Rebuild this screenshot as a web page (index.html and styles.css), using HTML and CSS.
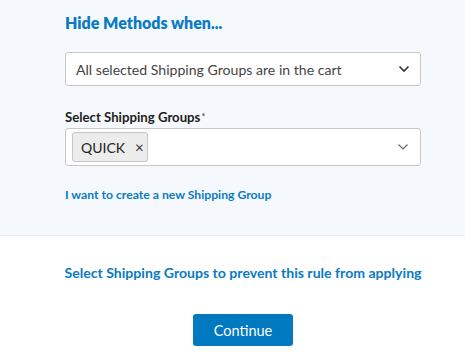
FILE: index.html
```html
<!DOCTYPE html>
<html>
<head>
<meta charset="utf-8">
<link rel="stylesheet" href="styles.css">
</head>
<body>
<section class="panel">
  <div class="col">
    <h2 class="title">Hide Methods when...</h2>
    <div class="select">
      <span class="select-text">All selected Shipping Groups are in the cart</span>
      <svg class="chev dark" width="12" height="8" viewBox="0 0 12 8"><path d="M1.5 1.5 L6 6 L10.5 1.5" fill="none" stroke="#333" stroke-width="1.6"/></svg>
    </div>
    <label class="label">Select Shipping Groups<span class="req">*</span></label>
    <div class="multi">
      <span class="chip">QUICK <span class="x">×</span></span>
      <svg class="chev" width="12" height="8" viewBox="0 0 12 8"><path d="M1.5 1.5 L6 6 L10.5 1.5" fill="none" stroke="#666" stroke-width="1.1"/></svg>
    </div>
    <a class="link" href="#">I want to create a new Shipping Group</a>
  </div>
</section>
<section class="footer">
  <div class="col center">
    <p class="hint">Select Shipping Groups to prevent this rule from applying</p>
    <button class="btn">Continue</button>
  </div>
</section>
</body>
</html>
```
FILE: styles.css
```css
* { box-sizing: border-box; }
html, body { margin: 0; padding: 0; background: #fff; }
body { font-family: Lato, "Open Sans", sans-serif; color: #222; }
.panel {
  background: #f5f9fd;
  border-bottom: 1px solid #e3e9ef;
  height: 236px;
  padding-top: 13px;
}
.col { margin-left: 65px; width: 356px; display: flex; flex-direction: column; }
.center { align-items: center; }
.title {
  margin: 0;
  font-size: 16px;
  font-weight: 800;
  color: #0a7ac4;
  line-height: 20px;
}
.select {
  margin-top: 19px;
  height: 34px;
  background: #fff;
  border: 1px solid #c8c8c8;
  border-radius: 3px;
  display: flex;
  align-items: center;
  justify-content: space-between;
  padding: 0 10px 0 10px;
}
.select-text { font-size: 14.1px; color: #444; }
.label {
  margin-top: 23px;
  font-size: 13.2px;
  font-weight: 700;
  color: #222;
  line-height: 16px;
}
.req { font-size: 9px; vertical-align: top; color: #555; margin-left: 1px; }
.multi {
  margin-top: 3px;
  height: 38px;
  background: #fff;
  border: 1px solid #c8c8c8;
  border-radius: 3px;
  display: flex;
  align-items: center;
  justify-content: space-between;
  padding: 0 11px 0 6px;
}
.chip {
  height: 30px;
  width: 76px;
  background: #ececec;
  border: 1px solid #c6c6c6;
  border-radius: 3px;
  display: flex;
  align-items: center;
  padding-left: 8px;
  font-size: 14px;
  color: #222;
}
.x { margin-left: 10px; font-size: 15px; color: #333; }
.link {
  margin-top: 21px;
  font-size: 12.2px;
  font-weight: 700;
  color: #0a7ac4;
  text-decoration: none;
  line-height: 15px;
}
.footer { padding-top: 28px; }
.hint {
  margin: 0;
  font-size: 14.1px;
  font-weight: 700;
  color: #0a7ac4;
  line-height: 18px;
  white-space: nowrap;
}
.btn {
  margin-top: 32px;
  width: 100px;
  height: 32px;
  background: #0079c1;
  color: #fff;
  border: none;
  border-radius: 3px;
  font-family: inherit;
  font-size: 14.5px;
}
```
